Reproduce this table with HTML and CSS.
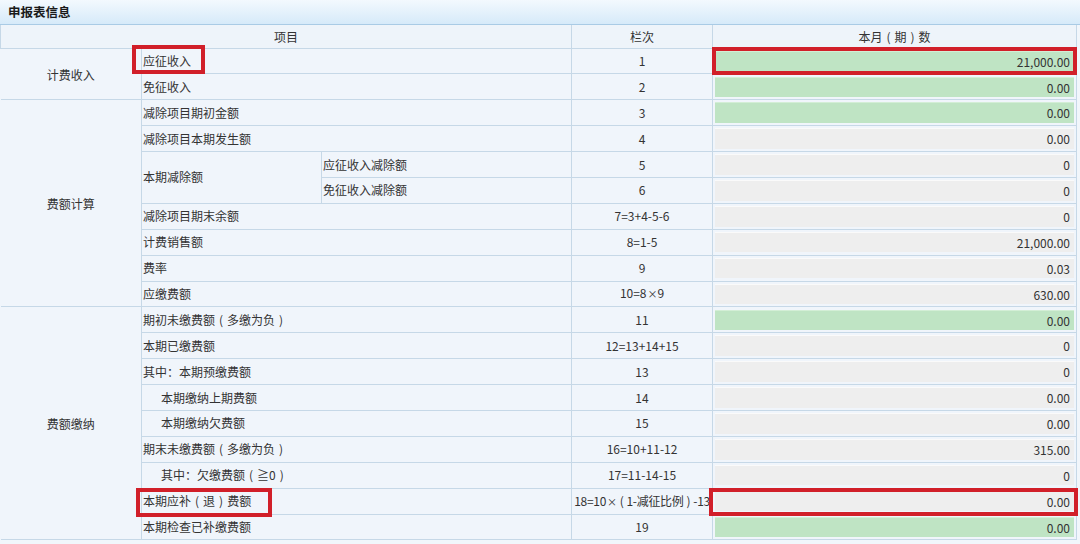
FILE: index.html
```html
<!DOCTYPE html>
<html lang="zh">
<head>
<meta charset="utf-8">
<link rel="stylesheet" href="styles.css">
</head>
<body>
<div class="panel">
  <div class="title">申报表信息</div>
  <table class="grid">
    <colgroup>
      <col class="c-cat"><col class="c-item"><col class="c-sub"><col class="c-no"><col class="c-val">
    </colgroup>
    <thead>
      <tr><th colspan="3">项目</th><th>栏次</th><th>本月<span class="par">(</span>期<span class="par">)</span>数</th></tr>
    </thead>
    <tbody>
      <tr class="grp">
        <td class="cat" rowspan="2">计费收入</td>
        <td class="item" colspan="2"><span class="lbl">应征收入</span><span class="mark mark-l1"></span></td>
        <td class="no">1</td>
        <td class="val"><div class="box green">21,000.00</div><span class="mark mark-v"></span></td>
      </tr>
      <tr>
        <td class="item" colspan="2">免征收入</td>
        <td class="no">2</td>
        <td class="val"><div class="box green">0.00</div></td>
      </tr>
      <tr class="grp">
        <td class="cat" rowspan="8">费额计算</td>
        <td class="item" colspan="2">减除项目期初金额</td>
        <td class="no">3</td>
        <td class="val"><div class="box green">0.00</div></td>
      </tr>
      <tr>
        <td class="item" colspan="2">减除项目本期发生额</td>
        <td class="no">4</td>
        <td class="val"><div class="box">0.00</div></td>
      </tr>
      <tr>
        <td class="item" rowspan="2">本期减除额</td>
        <td class="sub">应征收入减除额</td>
        <td class="no">5</td>
        <td class="val"><div class="box">0</div></td>
      </tr>
      <tr>
        <td class="sub">免征收入减除额</td>
        <td class="no">6</td>
        <td class="val"><div class="box">0</div></td>
      </tr>
      <tr>
        <td class="item" colspan="2">减除项目期末余额</td>
        <td class="no">7=3+4-5-6</td>
        <td class="val"><div class="box">0</div></td>
      </tr>
      <tr>
        <td class="item" colspan="2">计费销售额</td>
        <td class="no">8=1-5</td>
        <td class="val"><div class="box">21,000.00</div></td>
      </tr>
      <tr>
        <td class="item" colspan="2">费率</td>
        <td class="no">9</td>
        <td class="val"><div class="box">0.03</div></td>
      </tr>
      <tr>
        <td class="item" colspan="2">应缴费额</td>
        <td class="no">10=8<span class="times">×</span>9</td>
        <td class="val"><div class="box">630.00</div></td>
      </tr>
      <tr class="grp">
        <td class="cat" rowspan="9">费额缴纳</td>
        <td class="item" colspan="2">期初未缴费额<span class="par">(</span>多缴为负<span class="par">)</span></td>
        <td class="no">11</td>
        <td class="val"><div class="box green">0.00</div></td>
      </tr>
      <tr>
        <td class="item" colspan="2">本期已缴费额</td>
        <td class="no">12=13+14+15</td>
        <td class="val"><div class="box">0</div></td>
      </tr>
      <tr>
        <td class="item" colspan="2">其中：本期预缴费额</td>
        <td class="no">13</td>
        <td class="val"><div class="box">0</div></td>
      </tr>
      <tr>
        <td class="item ind" colspan="2">本期缴纳上期费额</td>
        <td class="no">14</td>
        <td class="val"><div class="box">0.00</div></td>
      </tr>
      <tr>
        <td class="item ind" colspan="2">本期缴纳欠费额</td>
        <td class="no">15</td>
        <td class="val"><div class="box">0.00</div></td>
      </tr>
      <tr>
        <td class="item" colspan="2">期末未缴费额<span class="par">(</span>多缴为负<span class="par">)</span></td>
        <td class="no">16=10+11-12</td>
        <td class="val"><div class="box">315.00</div></td>
      </tr>
      <tr>
        <td class="item ind" colspan="2">其中：欠缴费额<span class="par">(</span>≧0<span class="par">)</span></td>
        <td class="no">17=11-14-15</td>
        <td class="val"><div class="box">0</div></td>
      </tr>
      <tr>
        <td class="item" colspan="2"><span class="lbl">本期应补<span class="par">(</span>退<span class="par">)</span>费额</span><span class="mark mark-l2"></span></td>
        <td class="no tight">18=10<span class="times">×</span><span class="par">(</span>1-减征比例<span class="par">)</span>-13</td>
        <td class="val"><div class="box">0.00</div><span class="mark mark-v2"></span></td>
      </tr>
      <tr>
        <td class="item" colspan="2">本期检查已补缴费额</td>
        <td class="no">19</td>
        <td class="val"><div class="box green">0.00</div></td>
      </tr>
    </tbody>
  </table>
</div>
</body>
</html>
```

FILE: styles.css
```css
* { box-sizing: border-box; }
html, body {
  margin: 0;
  padding: 0;
  background: #ffffff;
}
body {
  font-family: "Noto Sans CJK SC", "Noto Sans", sans-serif;
  font-size: 12px;
  color: #333333;
}
.panel {
  width: 1080px;
  height: 544px;
  overflow: hidden;
  background: #f1f6fb;
}
.title {
  height: 25px;
  line-height: 24px;
  padding-left: 8px;
  font-weight: bold;
  font-size: 12.5px;
  color: #1a1a1a;
  background: linear-gradient(#f3f9fe, #d6eaf9);
  border-bottom: 1px solid #a9cbe5;
}
.grid {
  width: 1076px;
  border-collapse: collapse;
  table-layout: fixed;
  background: #f0f5fb;
}
.c-cat { width: 141px; }
.c-item { width: 180px; }
.c-sub { width: 250px; }
.c-no { width: 141px; }
.c-val { width: 364px; }
.grid th {
  height: 23px;
  font-weight: normal;
  font-size: 12px;
  color: #333;
  border: 1px solid #c6d8e7;
  border-top: none;
  padding: 0;
  text-align: center;
  background: #eef4fa;
}
.grid td {
  height: 25.9px;
  border: 1px solid #c6d8e7;
  padding: 0;
  vertical-align: middle;
  white-space: nowrap;
  position: relative;
  line-height: 16px;
}
.grid td.cat {
  text-align: center;
  padding-top: 2px;
  border-left: none;
}
.grid td.item {
  padding-left: 1px;
  border-left: 1px solid #d6e2ec;
}
.grid td.item.ind { padding-left: 19px; }
.grid td.sub { padding-left: 1px; }
.grid td.no { text-align: center; }
.grid td.no.tight { letter-spacing: -0.3px; }
.par { margin: 0 4px; }
.tight .par { margin: 0 3px; }
.times { font-size: 10px; margin-left: 1px; }
.grid td.val { padding: 2px; }
.box {
  height: 20.5px;
  line-height: 20px;
  text-align: right;
  padding-right: 4px;
  background: #eeeeee;
  border-top: 1px solid #fafafa;
  color: #333;
}
.box.green { background: #bfe4c4; border-top-color: #d3eed6; }
.lbl { position: relative; }
.mark {
  position: absolute;
  border: 4px solid #d11f29;
  pointer-events: none;
}
.mark-l1 { left: -10px; top: -4px; width: 73px; height: 29px; }
.mark-l2 { left: -6px; top: -1px; width: 136px; height: 29px; }
.mark-v { left: -1px; top: -2px; right: -1px; height: 28px; }
.mark-v2 { left: -4px; top: -1px; right: -2px; height: 28px; }
```
